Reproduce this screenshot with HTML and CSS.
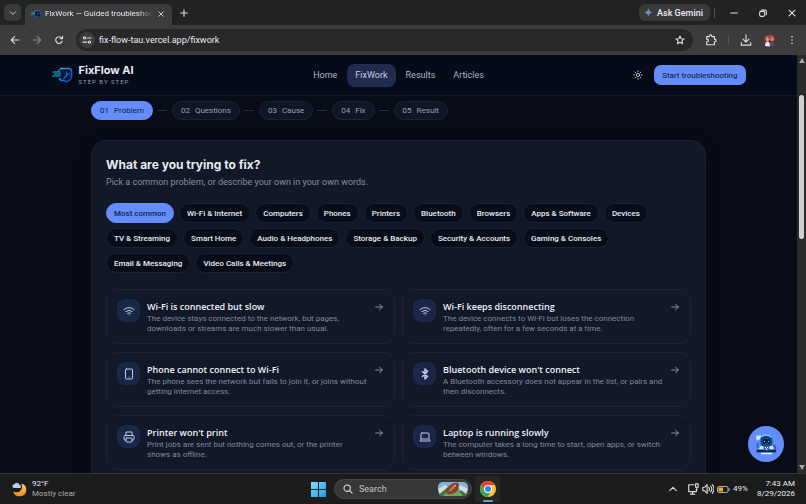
FILE: index.html
```html
<!DOCTYPE html>
<html lang="en">
<head>
<meta charset="utf-8">
<title>FixWork — Guided troubleshooting</title>
<link rel="stylesheet" href="styles.css">
</head>
<body>
<svg class="defs" aria-hidden="true">
  <defs>
    <linearGradient id="brand" x1="0" y1="0" x2="1" y2="1"><stop offset="0" stop-color="#27b8ea"/><stop offset="1" stop-color="#1238a8"/></linearGradient>
    <linearGradient id="win" x1="0" y1="0" x2="1" y2="1"><stop offset="0" stop-color="#7be3fb"/><stop offset="1" stop-color="#159ae9"/></linearGradient>
    <linearGradient id="moon" x1="0" y1="0" x2="0" y2="1"><stop offset="0" stop-color="#ffd25a"/><stop offset="1" stop-color="#f0891c"/></linearGradient>
  </defs>
  <symbol id="logo" viewBox="0 0 42 32">
    <path d="M16 3h17q6 0 6 6v12q0 4-7 7l-3 2-4-3h-4q-6 0-6-5" fill="#071638" stroke="url(#brand)" stroke-width="3" stroke-linejoin="round"/>
    <path d="M17 3q-4 1-4 6M2 10h14M5 14h12M1 18h15" fill="none" stroke="#22b7ea" stroke-width="2" stroke-linecap="round"/>
    <path d="M22 23l6-8q-2-5 2-7v4l3 1 2-3q2 6-4 7l-6 7z" fill="#1560b8"/>
  </symbol>
  <symbol id="arrow" viewBox="0 0 24 24"><path d="M4 12h16M13 5l7 7-7 7"/></symbol>
  <symbol id="wifi" viewBox="0 0 24 24"><path d="M2 9q10-8 20 0M5.500 13q6.500-5 13 0M9 16.500q3-2 6 0M12 20h.01"/></symbol>
  <symbol id="phone" viewBox="0 0 24 24"><rect x="5" y="2" width="14" height="20" rx="2"/><path d="M12 18h.01"/></symbol>
  <symbol id="printer" viewBox="0 0 24 24"><path d="M6 9V2h12v7M6 18H4a2 2 0 0 1-2-2v-5a2 2 0 0 1 2-2h16a2 2 0 0 1 2 2v5a2 2 0 0 1-2 2h-2"/><rect x="6" y="14" width="12" height="8" rx="1"/></symbol>
  <symbol id="bluetooth" viewBox="0 0 24 24"><path d="M7 7l10 10-5 5V2l5 5L7 17"/></symbol>
  <symbol id="laptop" viewBox="0 0 24 24"><rect x="4" y="4" width="16" height="12" rx="2"/><path d="M4 16l-2 4h20l-2-4"/></symbol>
</svg>

<div class="tabbar">
  <button class="tab-search" aria-label="Search tabs"><svg class="ico-s line" viewBox="0 0 12 12"><path d="M2 4l4 4 4-4"/></svg></button>
  <div class="tab">
    <svg class="favicon"><use href="#logo"/></svg>
    <span class="tab-title">FixWork — Guided troubleshoo</span>
    <button class="plain" aria-label="Close tab"><svg class="ico-s line" viewBox="0 0 12 12"><path d="M2.500 2.500l7 7M9.500 2.500l-7 7"/></svg></button>
  </div>
  <button class="plain new-tab" aria-label="New tab"><svg class="ico-m line" viewBox="0 0 12 12"><path d="M6 2v8M2 6h8"/></svg></button>
  <button class="gemini"><svg viewBox="0 0 20 20"><path d="M10 0Q11 9 20 10L10 10z" fill="#ed7466"/><path d="M10 0Q9 9 0 10L10 10z" fill="#57b87c"/><path d="M20 10Q11 11 10 20L10 10z" fill="#4287f5"/><path d="M0 10Q9 11 10 20L10 10z" fill="#d7be4b"/><circle cx="10" cy="10" r="4" fill="#5b8df5"/></svg>Ask Gemini</button>
  <span class="divider"></span>
  <div class="window-controls">
    <button class="plain" aria-label="Minimize"><svg class="ico-m line" viewBox="0 0 12 12"><path d="M2 6h8"/></svg></button>
    <button class="plain" aria-label="Restore"><svg class="ico-m line" viewBox="0 0 12 12"><rect x="2" y="4" width="6" height="6" rx="1.500"/><path d="M4 2.500h4.500q1.500 0 1.500 1.500v4"/></svg></button>
    <button class="plain" aria-label="Close"><svg class="ico-m line" viewBox="0 0 12 12"><path d="M2.500 2.500l7 7M9.500 2.500l-7 7"/></svg></button>
  </div>
</div>

<div class="toolbar">
  <button class="plain" aria-label="Back"><svg class="ico-m line" viewBox="0 0 12 12"><path d="M10.500 6h-9M5.500 2l-4 4 4 4"/></svg></button>
  <button class="plain dim" aria-label="Forward"><svg class="ico-m line" viewBox="0 0 12 12"><path d="M1.500 6h9M6.500 2l4 4-4 4"/></svg></button>
  <button class="plain" aria-label="Reload"><svg class="ico-m line" viewBox="0 0 12 12"><path d="M9.800 7.500A4 4 0 1 1 9 3.300L10.300 4.500M10.300 1.500v3h-3"/></svg></button>
  <div class="omnibox">
    <button class="site-info" aria-label="Site information"><svg class="ico-m line" viewBox="0 0 12 12"><circle cx="3" cy="3.500" r="1.300"/><path d="M6 3.500h5M1 8.500h5"/><circle cx="9" cy="8.500" r="1.300"/></svg></button>
    <input class="url" type="text" value="fix-flow-tau.vercel.app/fixwork" aria-label="Address">
    <button class="plain" aria-label="Bookmark"><svg class="ico-m line" viewBox="0 0 12 12"><path d="M6 1.200l1.400 3.200 3.500.3-2.600 2.300.8 3.500L6 8.700l-3.100 1.800.8-3.500L1.100 4.700l3.500-.3z"/></svg></button>
  </div>
  <div class="actions">
    <button class="plain" aria-label="Extensions"><svg class="ico-l line" viewBox="0 0 14 14"><path d="M2 3h3q0-2 1.500-2T8 3h3v3q2 0 2 1.500T11 9v3.500H2V9q2 0 2-1.500T2 6z"/></svg></button>
    <span class="divider"></span>
    <button class="plain" aria-label="Downloads"><svg class="ico-l line" viewBox="0 0 14 14"><path d="M7 1v8M3.500 6L7 9.500 10.500 6M1.500 10v3h11v-3"/></svg></button>
    <button class="plain" aria-label="Profile"><svg class="ico-xl" viewBox="0 0 26 26"><circle cx="13" cy="13" r="13" fill="#6c2f30"/><path d="M2 10q2-8 8-6 7-5 12 2l2 6-11-3z" fill="#aa4841"/><circle cx="9" cy="11" r="3.500" fill="#dba491"/><circle cx="18" cy="11" r="3.500" fill="#c98a76"/><path d="M4 24q0-9 5-9t5 10z" fill="#e8e0ea"/><path d="M14 25q0-9 5-9t4 6q-3 3-9 3z" fill="#3c5487"/><path d="M6 7l3-3M17 5l4 3" stroke="#e86e5b" stroke-width="2"/></svg></button>
    <button class="plain" aria-label="Menu"><svg class="ico-m" viewBox="0 0 12 12" fill="#d6d6d6"><circle cx="6" cy="2" r="1"/><circle cx="6" cy="6" r="1"/><circle cx="6" cy="10" r="1"/></svg></button>
  </div>
</div>

<div class="viewport">
  <div class="page">
    <header class="site-header">
      <div class="header-inner">
        <a class="brand" href="#">
          <svg><use href="#logo"/></svg>
          <span><strong>FixFlow AI</strong><small>STEP BY STEP</small></span>
        </a>
        <nav>
          <a href="#">Home</a><a class="active" href="#">FixWork</a><a href="#">Results</a><a href="#">Articles</a>
        </nav>
        <div class="header-actions">
          <button class="plain" aria-label="Toggle theme"><svg class="ico-m line" viewBox="0 0 24 24" stroke-width="2"><circle cx="12" cy="12" r="4"/><path d="M12 2v2M12 20v2M2 12h2M20 12h2M5 5l1.500 1.500M17.500 17.500L19 19M5 19l1.500-1.500M17.500 6.500L19 5"/></svg></button>
          <button class="cta">Start troubleshooting</button>
        </div>
      </div>
    </header>
    <main>
      <ol class="steps">
        <li class="current"><span>01</span>Problem</li>
        <li><span>02</span>Questions</li>
        <li><span>03</span>Cause</li>
        <li><span>04</span>Fix</li>
        <li><span>05</span>Result</li>
      </ol>
      <section class="panel">
        <h1>What are you trying to fix?</h1>
        <p class="lead">Pick a common problem, or describe your own in your own words.</p>
        <div class="chips">
          <button class="chip selected">Most common</button>
          <button class="chip">Wi-Fi &amp; Internet</button>
          <button class="chip">Computers</button>
          <button class="chip">Phones</button>
          <button class="chip">Printers</button>
          <button class="chip">Bluetooth</button>
          <button class="chip">Browsers</button>
          <button class="chip">Apps &amp; Software</button>
          <button class="chip">Devices</button>
          <button class="chip">TV &amp; Streaming</button>
          <button class="chip">Smart Home</button>
          <button class="chip">Audio &amp; Headphones</button>
          <button class="chip">Storage &amp; Backup</button>
          <button class="chip">Security &amp; Accounts</button>
          <button class="chip">Gaming &amp; Consoles</button>
          <button class="chip">Email &amp; Messaging</button>
          <button class="chip">Video Calls &amp; Meetings</button>
        </div>
        <div class="cards">
          <a class="card" href="#"><span class="card-icon"><svg><use href="#wifi"/></svg></span><span class="card-text"><strong>Wi-Fi is connected but slow</strong><span>The device stays connected to the network, but pages,<br>downloads or streams are much slower than usual.</span></span><svg class="card-arrow"><use href="#arrow"/></svg></a>
          <a class="card" href="#"><span class="card-icon"><svg><use href="#wifi"/></svg></span><span class="card-text"><strong>Wi-Fi keeps disconnecting</strong><span>The device connects to Wi-Fi but loses the connection<br>repeatedly, often for a few seconds at a time.</span></span><svg class="card-arrow"><use href="#arrow"/></svg></a>
          <a class="card" href="#"><span class="card-icon"><svg><use href="#phone"/></svg></span><span class="card-text"><strong>Phone cannot connect to Wi-Fi</strong><span>The phone sees the network but fails to join it, or joins without<br>getting internet access.</span></span><svg class="card-arrow"><use href="#arrow"/></svg></a>
          <a class="card" href="#"><span class="card-icon bold"><svg><use href="#bluetooth"/></svg></span><span class="card-text"><strong>Bluetooth device won't connect</strong><span>A Bluetooth accessory does not appear in the list, or pairs and<br>then disconnects.</span></span><svg class="card-arrow"><use href="#arrow"/></svg></a>
          <a class="card" href="#"><span class="card-icon"><svg><use href="#printer"/></svg></span><span class="card-text"><strong>Printer won't print</strong><span>Print jobs are sent but nothing comes out, or the printer<br>shows as offline.</span></span><svg class="card-arrow"><use href="#arrow"/></svg></a>
          <a class="card" href="#"><span class="card-icon"><svg><use href="#laptop"/></svg></span><span class="card-text"><strong>Laptop is running slowly</strong><span>The computer takes a long time to start, open apps, or switch<br>between windows.</span></span><svg class="card-arrow"><use href="#arrow"/></svg></a>
        </div>
      </section>
    </main>
    <button class="assistant" aria-label="Open assistant">
      <svg viewBox="0 0 44 44">
        <path d="M2 8q0-3 3-3h8v8H7l-3 2z" fill="#d9efff"/>
        <path d="M10 19q-1-15 13-16 13 1 13 17l-4 8H13z" fill="#0b3f91" stroke="#3b9fe8" stroke-width="2"/>
        <path d="M14 7q9-6 18 1" fill="none" stroke="#c4ecff" stroke-width="2"/>
        <rect x="14" y="11" width="18" height="13" rx="6" fill="#061233" stroke="#2386da"/>
        <circle cx="19" cy="17" r="1.500" fill="#49e1ff"/><circle cx="27" cy="17" r="1.500" fill="#49e1ff"/>
        <path d="M20 21q3 2 6 0" fill="none" stroke="#49e1ff"/>
        <path d="M11 26h24l3 8H7z" fill="#d4ebff"/>
        <path d="M17 26h12v7H17z" fill="#2b62b8"/><path d="M20 28l3 3 3-3" fill="none" stroke="#fff" stroke-width="2"/>
        <path d="M3 33h16l4 2 4-2h15v6H3z" fill="#0d2350" stroke="#2b87cf"/>
        <path d="M12 41h22" stroke="#e4f5ff" stroke-width="3"/><path d="M37 24q5 3 4 9" fill="none" stroke="#5a3cc4" stroke-width="3"/><path d="M7 20q-4 5-1 10" fill="none" stroke="#1c5fc0" stroke-width="3"/>
      </svg>
    </button>
  </div>
  <div class="scrollbar" aria-hidden="true"><span class="up"></span><span class="thumb"></span><span class="down"></span></div>
</div>

<footer class="taskbar">
  <div class="weather">
    <svg viewBox="0 0 32 32"><path d="M20 3a14 14 0 1 1-17 17q12 5 17-4 3-6 0-13z" fill="url(#moon)"/><path d="M5 13q-4 0-4-4t4-4q2-4 6-3 4 0 5 4 4 1 3 5-1 2-3 2z" fill="#b9d2fb"/></svg>
    <div><div>92°F</div><div class="muted">Mostly clear</div></div>
  </div>
  <div class="dock">
    <button class="plain" aria-label="Start"><svg class="start" viewBox="0 0 15 15" fill="url(#win)"><path d="M0 0h7v7H0zM8 0h7v7H8zM0 8h7v7H0zM8 8h7v7H8z"/></svg></button>
    <label class="search">
      <svg class="ico-m line" viewBox="0 0 12 12"><circle cx="5" cy="5" r="3.800"/><path d="M8 8l3 3"/></svg>
      <input type="text" placeholder="Search" aria-label="Search">
      <svg class="football" viewBox="0 0 60 30"><rect y="1" width="60" height="28" rx="10" fill="#79b7e2"/><path d="M0 15Q15 7 30 15T60 15v7q-3 7-10 7H10Q2 29 0 22z" fill="#446b42"/><path d="M0 15l14-8 6 4L3 25zM60 15L45 7l-6 4 17 14z" fill="#d5dddb"/><path d="M10 29q8-12 20-13t20 13z" fill="#6aa85d"/><path d="M18 25Q15 11 27 5q7-4 14-2 3 14-6 19-8 5-17 3z" fill="#854323"/><path d="M22 20L36 7M24 14l4 4M28 10l4 4M32 7l3 3" stroke="#efc8a2" stroke-width="1.500"/></svg>
    </label>
    <button class="chrome" aria-label="Chrome"><svg viewBox="0 0 32 32"><circle cx="16" cy="16" r="16" fill="#f8c92f"/><path d="M2 8A16 16 0 0 1 30 8H16L9 20z" fill="#e94335"/><path d="M2 8A16 16 0 0 0 15 32l8-12H9z" fill="#34a853"/><circle cx="16" cy="16" r="8" fill="#fff"/><circle cx="16" cy="16" r="6" fill="#3483f4"/></svg></button>
  </div>
  <div class="tray">
    <button class="plain" aria-label="Show hidden icons"><svg class="ico-m line" viewBox="0 0 12 12"><path d="M2 8l4-4 4 4"/></svg></button>
    <div class="status">
      <svg class="ico-l line" viewBox="0 0 14 14"><path d="M8 2H2v8h9V7M4 13h5M6.500 10v3M10 1h3v4h-3zM11.500 5v3"/></svg>
      <svg class="ico-l line" viewBox="0 0 14 14"><path d="M1 5h2l3-3v10L3 9H1zM8 5q1.500 2 0 4M10 3.500q3 3.500 0 7M12 2q4 5 0 10"/></svg>
      <svg class="battery" viewBox="0 0 26 14"><rect x="1" y="1" width="21" height="12" rx="3" fill="none" stroke="#ddd" stroke-width="1.500"/><rect x="3" y="3" width="9" height="8" fill="#f7ae1d"/><path d="M24 5v4" stroke="#ddd" stroke-width="2"/></svg>
      <span>49%</span>
    </div>
    <div class="clock"><div>7:43 AM</div><div>8/29/2026</div></div>
  </div>
</footer>
</body>
</html>
```
FILE: styles.css
```css
* { box-sizing: border-box; }
html, body { height: 100%; }
body { margin: 0; display: flex; flex-direction: column; overflow: hidden; background: #080c19; color: #e8ebf4; font-family: Roboto, sans-serif; font-size: 8px; }
button, input { font: inherit; color: inherit; }
button { border: 0; padding: 0; }
a { color: inherit; text-decoration: none; }
svg { display: block; flex: none; }
.defs { position: absolute; width: 0; height: 0; }
.plain { background: none; display: flex; }
.line { fill: none; stroke: #dedede; stroke-width: 1.3; stroke-linecap: round; stroke-linejoin: round; }
.line[stroke-width] { stroke-width: 2; }
.ico-s { width: 8px; height: 8px; }
.ico-m { width: 10px; height: 10px; }
.ico-l { width: 12px; height: 12px; }
.ico-xl { width: 13px; height: 13px; }
.dim { opacity: 0.45; }
.divider { width: 1px; height: 10px; background: #505251; }

.tabbar { flex: none; height: 25px; display: flex; align-items: center; background: #202322; padding: 0 9px 0 4px; }
.tab-search { width: 17px; height: 17px; border-radius: 5px; background: #393b3a; display: grid; place-items: center; }
.tab { align-self: flex-end; width: 147px; height: 21px; margin-left: 4px; padding: 0 7px 2px 6px; display: flex; align-items: center; gap: 4px; background: #3c3c3c; border-radius: 6px 6px 0 0; }
.favicon { width: 10px; height: 8px; }
.tab-title { flex: 1; white-space: nowrap; mask-image: linear-gradient(90deg, #000 85%, transparent); }
.new-tab { margin-left: 7px; }
.gemini { margin-left: auto; height: 17px; padding: 0 7px 0 5px; display: flex; align-items: center; gap: 4px; border-radius: 6px; background: #383a39; font-weight: 500; font-size: 9px; }
.gemini svg { width: 9px; height: 9px; }
.tabbar .divider { margin: 0 14px 0 4px; }
.window-controls { display: flex; gap: 19px; }

.toolbar { flex: none; height: 30px; display: flex; align-items: center; gap: 12px; padding: 0 9px 0 10px; background: #3c3c3c; }
.omnibox { flex: 1; height: 22px; display: flex; align-items: center; gap: 4px; padding: 0 8px 0 3px; border-radius: 11px; background: #282828; }
.site-info { width: 16px; height: 16px; border-radius: 50%; background: #3c3c3c; display: grid; place-items: center; }
.url { flex: 1; min-width: 0; border: 0; padding: 0; background: none; font-size: 9px; }
.actions { display: flex; align-items: center; gap: 11px; }

.viewport { flex: 1; min-height: 0; display: flex; }
.page { position: relative; flex: 1; min-width: 0; overflow: hidden; background: #080c18; }
.site-header { height: 41px; border-bottom: 1px solid #131827; background: #060b19; }
.header-inner { height: 100%; max-width: 694px; margin: 0 auto; display: grid; grid-template-columns: 1fr auto 1fr; align-items: center; }
.brand { display: flex; align-items: center; gap: 6px; }
.brand svg { width: 21px; height: 16px; }
.brand strong, .brand small { display: block; }
.brand strong { font-family: Inter, sans-serif; font-size: 11px; line-height: 13px; }
.brand small { font-size: 6px; line-height: 10px; letter-spacing: 1px; color: #949dae; }
nav { display: flex; gap: 2px; font-size: 9px; color: #a9b2c4; }
nav a { padding: 0 8px; line-height: 23px; border-radius: 8px; }
nav .active { background: #202b4d; color: #c4cce0; }
.header-actions { justify-self: end; display: flex; align-items: center; gap: 11px; }
.cta { height: 20px; padding: 0 8px; border-radius: 7px; background: #648cfa; color: #0b1735; font-size: 8px; }

main { max-width: 615px; margin: 0 auto; padding-top: 5px; }
.steps { display: flex; align-items: center; margin: 0; padding: 0; list-style: none; font-size: 8px; color: #97a1b6; }
.steps li { position: relative; display: flex; gap: 5px; margin-right: 19px; padding: 0 8px; line-height: 17px; border: 1px solid #1c2231; border-radius: 10px; background: #111625; }
.steps li + li::before { content: ""; position: absolute; left: -16px; top: 8px; width: 10px; height: 1px; background: #252b3a; }
.steps .current { background: #648cfa; border-color: #648cfa; color: #0f1e46; }
.panel { margin-top: 20px; min-height: 420px; padding: 15px 14px; border: 1px solid #1c2231; border-radius: 15px; background: #121827; box-shadow: 0 4px 18px #05081066; }
h1 { margin: 0; font-family: Inter, sans-serif; font-size: 12px; line-height: 17px; font-weight: 700; }
.lead { margin: 3px 0 0; font-size: 9px; line-height: 13px; color: #828da2; }
.chips { display: flex; flex-wrap: wrap; gap: 5px; margin-top: 14px; }
.chip { height: 20px; padding: 0 7px; border: 1px solid #1b2130; border-radius: 10px; background: #080d19; font-size: 8px; font-weight: 500; white-space: nowrap; }
.chip.selected { background: #648cfa; border-color: #648cfa; color: #142552; }
.cards { display: grid; grid-template-columns: 1fr 1fr; gap: 8px 7px; margin-top: 16px; }
.card { display: flex; gap: 7px; min-height: 55px; padding: 9px 10px 8px; border: 1px solid #1c2231; border-radius: 12px; }
.card-icon { flex: none; width: 23px; height: 23px; display: grid; place-items: center; border-radius: 8px; background: #1b2747; }
.card-icon svg { width: 12px; height: 12px; fill: none; stroke: #bdcbed; stroke-width: 2; stroke-linecap: round; stroke-linejoin: round; }
.card-icon.bold svg { stroke-width: 3; }
.card-text { flex: 1; min-width: 0; color: #7f899d; font-size: 8px; line-height: 10px; white-space: nowrap; }
.card-text strong { display: block; color: #eef1f8; font-family: "Open Sans", sans-serif; font-size: 9px; line-height: 15px; font-weight: 600; }
.card-arrow { width: 10px; height: 10px; margin-top: 3px; fill: none; stroke: #a0a9ba; stroke-width: 2; stroke-linecap: round; stroke-linejoin: round; }
.assistant { position: absolute; right: 13px; bottom: 11px; width: 36px; height: 36px; border-radius: 50%; background: #648cfa; display: grid; place-items: center; }
.assistant svg { width: 22px; height: 22px; }
.scrollbar { flex: none; width: 9px; display: flex; flex-direction: column; align-items: center; padding: 3px 0; background: #2b2b2b; }
.up, .down { border: 3px solid transparent; }
.up { border-top: 0; border-bottom: 5px solid #a3a3a3; }
.down { margin-top: auto; border-bottom: 0; border-top: 5px solid #a3a3a3; }
.thumb { width: 5px; height: 35%; margin-top: 32px; border-radius: 3px; background: #cfcfcf; }

.taskbar { flex: none; height: 31px; display: grid; grid-template-columns: 1fr auto 1fr; align-items: center; padding: 0 11px 0 12px; border-top: 1px solid #353535; background: #1c1c1c; line-height: 10px; }
.weather { display: flex; align-items: center; gap: 5px; }
.weather svg { width: 15px; height: 15px; }
.muted { color: #a9a9a9; }
.dock { display: flex; align-items: center; gap: 8px; padding-left: 4px; }
.start { width: 15px; height: 15px; }
.search { width: 138px; height: 20px; display: flex; align-items: center; gap: 6px; padding: 0 3px 0 8px; border: 1px solid #464646; border-radius: 10px; background: #373737; }
.search input { flex: 1; min-width: 0; border: 0; padding: 0; background: none; font-size: 9px; }
.search input::placeholder { color: #c4c4c4; opacity: 1; }
.football { width: 30px; height: 16px; }
.chrome { position: relative; width: 25px; height: 26px; display: grid; place-items: center; margin-left: -5px; background: #272727; border-radius: 3px; }
.chrome::after { content: ""; position: absolute; bottom: 0; width: 10px; height: 2px; border-radius: 1px; background: #57a8d6; }
.chrome svg { width: 16px; height: 16px; }
.tray { justify-self: end; display: flex; align-items: center; gap: 9px; }
.status { display: flex; align-items: center; gap: 3px; }
.battery { width: 13px; height: 7px; }
.clock { text-align: right; }
```
